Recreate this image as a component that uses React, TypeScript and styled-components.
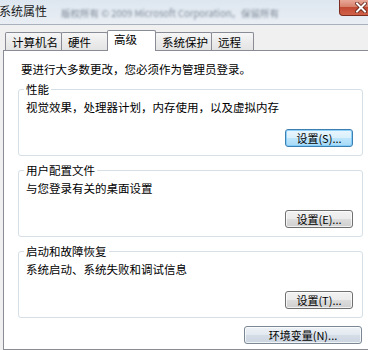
import styled, { createGlobalStyle } from "styled-components";

const GlobalStyle = createGlobalStyle`
  html, body {
    margin: 0;
    padding: 0;
    background: #f0f0f0;
  }
  body {
    font-family: "Noto Sans CJK SC", "Liberation Sans", sans-serif;
    color: #000;
  }
`;

const Window = styled.div`
  width: 368px;
  height: 350px;
  overflow: hidden;
  display: flex;
  flex-direction: column;
  background: #f0f0f0;
`;

const TitleBar = styled.div`
  height: 24px;
  flex-shrink: 0;
  display: flex;
  align-items: flex-start;
  background: linear-gradient(#dde6f0, #e5ebf2 60%, #e9eef4);
  border-bottom: 1px solid #a9b2bc;
`;

const TitleText = styled.div`
  margin: 3px 0 0 -1px;
  font-size: 12px;
  line-height: 16px;
  color: #1a1a1a;
  white-space: nowrap;
`;

const BlurText = styled.div`
  flex: 1;
  margin: 7px 0 0 14px;
  font-size: 9.5px;
  line-height: 12px;
  color: #7f8b99;
  white-space: nowrap;
  filter: blur(1.3px);
`;

const CloseButton = styled.div`
  width: 43px;
  height: 16px;
  flex-shrink: 0;
  margin-right: -14px;
  box-sizing: border-box;
  border: 1px solid #7d2c20;
  border-top: none;
  border-radius: 0 0 4px 4px;
  background: linear-gradient(#e9a797, #d7826d 45%, #c24a33 50%, #d0624a);
  display: flex;
  align-items: center;
  justify-content: center;
`;

const TabStrip = styled.div`
  display: flex;
  align-items: flex-end;
  height: 20px;
  margin-top: 5px;
  padding-left: 5px;
  flex-shrink: 0;
`;

const Tab = styled.div<{ $active?: boolean; $w: number }>`
  position: relative;
  z-index: ${(p) => (p.$active ? 2 : 1)};
  width: ${(p) => p.$w}px;
  height: ${(p) => (p.$active ? 21 : 18)}px;
  margin-left: -1px;
  margin-bottom: ${(p) => (p.$active ? -1 : 0)}px;
  box-sizing: border-box;
  border: 1px solid #898c95;
  border-bottom: none;
  border-radius: 2px 2px 0 0;
  background: ${(p) => (p.$active ? "#fff" : "linear-gradient(#f6f6f6, #ececec 50%, #e4e4e4)")};
  padding: ${(p) => (p.$active ? "1px 0 0 6px" : "2px 0 0 6px")};
  font-size: 11.5px;
  line-height: 14px;
  white-space: nowrap;
  &:first-child {
    margin-left: 0;
  }
`;

const Panel = styled.div`
  flex: 1;
  width: 390px;
  margin-left: 3px;
  box-sizing: border-box;
  background: #fff;
  border: 1px solid #898c95;
  padding: 11px 0 0 14px;
`;

const Intro = styled.div`
  padding-left: 3px;
  font-size: 11.5px;
  line-height: 14px;
  margin-bottom: 6px;
  white-space: nowrap;
`;

const Group = styled.fieldset`
  margin: 0 0 7px;
  width: 345px;
  min-width: 0;
  box-sizing: border-box;
  border: 1px solid #d5dfe5;
  border-radius: 3px;
  padding: 0 9px 8px 7px;
`;

const Legend = styled.legend`
  margin-left: -2px;
  padding: 0 2px;
  font-size: 11.5px;
  line-height: 14px;
`;

const Desc = styled.div`
  margin-top: 4px;
  font-size: 11.5px;
  line-height: 14px;
  white-space: nowrap;
`;

const ButtonRow = styled.div<{ $top: number }>`
  display: flex;
  justify-content: flex-end;
  margin-top: ${(p) => p.$top}px;
`;

const Footer = styled.div`
  width: 345px;
  display: flex;
  justify-content: flex-end;
  margin-top: 8px;
`;

const Button = styled.button<{ $default?: boolean; $w: number }>`
  width: ${(p) => p.$w}px;
  height: 18px;
  box-sizing: border-box;
  padding: 0;
  border: 1px solid ${(p) => (p.$default ? "#3c7fb1" : "#707070")};
  border-radius: 3px;
  background: ${(p) =>
    p.$default
      ? "linear-gradient(#eaf6fd, #d9f0fc 50%, #bee6fd 50%, #a7d9f5)"
      : "linear-gradient(#f2f2f2, #ebebeb 50%, #dddddd 50%, #cfcfcf)"};
  box-shadow: inset 0 0 0 1px ${(p) => (p.$default ? "rgba(120,200,250,0.8)" : "rgba(255,255,255,0.7)")};
  font-family: "Noto Sans CJK SC", "Liberation Sans", sans-serif;
  font-size: 11px;
  line-height: 16px;
  color: #000;
  white-space: nowrap;
`;

const EnvButton = styled(Button)`
  border-color: #7b8894;
  background: linear-gradient(#eef2f7, #e2e8ef 50%, #d5dde7 50%, #cbd5e0);
  margin-right: 1px;
`;

const tabs = [
  { label: "计算机名", w: 57 },
  { label: "硬件", w: 47 },
  { label: "高级", w: 49, active: true },
  { label: "系统保护", w: 57 },
  { label: "远程", w: 43 },
];

const groups = [
  { title: "性能", desc: "视觉效果，处理器计划，内存使用，以及虚拟内存", btn: "设置(S)...", def: true },
  { title: "用户配置文件", desc: "与您登录有关的桌面设置", btn: "设置(E)..." },
  { title: "启动和故障恢复", desc: "系统启动、系统失败和调试信息", btn: "设置(T)..." },
];

export default function App() {
  return (
    <>
      <GlobalStyle />
      <Window>
        <TitleBar>
          <TitleText>系统属性</TitleText>
          <BlurText>版权所有 © 2009 Microsoft Corporation。保留所有</BlurText>
          <CloseButton>
            <svg width="12" height="11" viewBox="0 0 12 11">
              <path d="M2 1.5 L10 9.5 M10 1.5 L2 9.5" stroke="#5a1a10" strokeWidth="3.6" strokeLinecap="square" />
              <path d="M2 1.5 L10 9.5 M10 1.5 L2 9.5" stroke="#fff" strokeWidth="2" strokeLinecap="square" />
            </svg>
          </CloseButton>
        </TitleBar>
        <TabStrip>
          {tabs.map((t) => (
            <Tab key={t.label} $w={t.w} $active={t.active}>
              {t.label}
            </Tab>
          ))}
        </TabStrip>
        <Panel>
          <Intro>要进行大多数更改，您必须作为管理员登录。</Intro>
          {groups.map((g) => (
            <Group key={g.title}>
              <Legend>{g.title}</Legend>
              <Desc>{g.desc}</Desc>
              <ButtonRow $top={15}>
                <Button $w={68} $default={g.def}>
                  {g.btn}
                </Button>
              </ButtonRow>
            </Group>
          ))}
          <Footer>
            <EnvButton $w={118}>环境变量(N)...</EnvButton>
          </Footer>
        </Panel>
      </Window>
    </>
  );
}
